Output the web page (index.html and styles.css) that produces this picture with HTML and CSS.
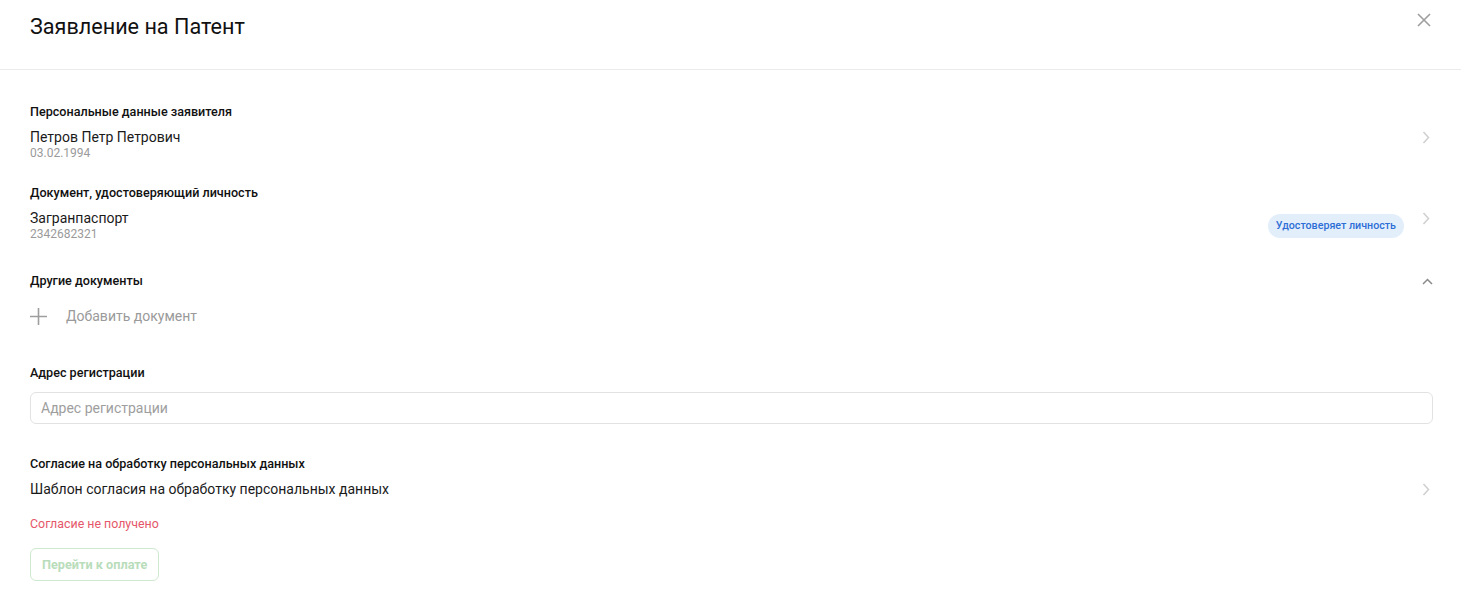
FILE: index.html
```html
<!DOCTYPE html>
<html lang="ru">
<head>
  <meta charset="UTF-8">
  <meta name="viewport" content="width=device-width, initial-scale=1.0">
  <title>Заявление на Патент</title>
  <link rel="stylesheet" href="styles.css">
</head>
<body>
  <div class="modal">
    <div class="head">
      <h1>Заявление на Патент</h1>
      <span class="close">
        <svg width="14" height="14" viewBox="0 0 14 14"><path d="M1 1L13 13M13 1L1 13" stroke="#9e9e9e" stroke-width="1.6" fill="none"/></svg>
      </span>
    </div>

    <div class="body">
      <!-- Personal data -->
      <div class="sec s1">
        <div class="label">Персональные данные заявителя</div>
        <div class="row">
          <div class="info">
            <div class="val">Петров Петр Петрович</div>
            <div class="sub">03.02.1994</div>
          </div>
          <svg class="chev" width="8" height="13" viewBox="0 0 8 13"><path d="M1.5 1L6.5 6.5L1.5 12" stroke="#cfcfcf" stroke-width="1.5" fill="none"/></svg>
        </div>
      </div>

      <!-- Identity document -->
      <div class="sec s2">
        <div class="label">Документ, удостоверяющий личность</div>
        <div class="row">
          <div class="info">
            <div class="val">Загранпаспорт</div>
            <div class="sub">2342682321</div>
          </div>
          <span class="badge">Удостоверяет личность</span>
          <svg class="chev" width="8" height="13" viewBox="0 0 8 13"><path d="M1.5 1L6.5 6.5L1.5 12" stroke="#cfcfcf" stroke-width="1.5" fill="none"/></svg>
        </div>
      </div>

      <!-- Other documents -->
      <div class="sec s3">
        <div class="label head-row">
          <span>Другие документы</span>
          <svg class="up" width="11" height="7" viewBox="0 0 11 7"><path d="M1 6L5.5 1.5L10 6" stroke="#8a8a8a" stroke-width="1.5" fill="none"/></svg>
        </div>
        <div class="add">
          <svg width="17" height="17" viewBox="0 0 17 17"><path d="M8.5 0V17M0 8.5H17" stroke="#9e9e9e" stroke-width="1.6" fill="none"/></svg>
          <span>Добавить документ</span>
        </div>
      </div>

      <!-- Address -->
      <div class="sec s4">
        <div class="label">Адрес регистрации</div>
        <input class="field" type="text" placeholder="Адрес регистрации">
      </div>

      <!-- Consent -->
      <div class="sec s5">
        <div class="label">Согласие на обработку персональных данных</div>
        <div class="row">
          <div class="val big">Шаблон согласия на обработку персональных данных</div>
          <svg class="chev" width="8" height="13" viewBox="0 0 8 13"><path d="M1.5 1L6.5 6.5L1.5 12" stroke="#cfcfcf" stroke-width="1.5" fill="none"/></svg>
        </div>
        <div class="err">Согласие не получено</div>
        <button class="pay" disabled>Перейти к оплате</button>
      </div>
    </div>
  </div>
</body>
</html>
```

FILE: styles.css
```css
body {
  margin: 0;
  font-family: Roboto, "Liberation Sans", Arial, sans-serif;
  color: #1a1a1a;
  background: #fff;
}

.head {
  height: 70px;
  border-bottom: 1px solid #ebebeb;
  box-sizing: border-box;
  display: flex;
  justify-content: space-between;
  align-items: flex-start;
  padding: 0 29px 0 30px;
}

.head h1 {
  margin: 13px 0 0;
  font-size: 21.6px;
  font-weight: 400;
  line-height: 28px;
  color: #111;
}

.close {
  margin-top: 12px;
  margin-right: 1px;
  cursor: pointer;
}

.body {
  padding: 34px 28px 0 30px;
}

.label {
  font-size: 12.6px;
  font-weight: 500;
  line-height: 16px;
  color: #111;
}

.row {
  display: flex;
  align-items: flex-start;
}

.head-row {
  display: flex;
  align-items: center;
}

.info {
  flex: 1;
  margin-top: 8px;
}

.val {
  font-size: 14px;
  line-height: 18px;
}

.val.big {
  flex: 1;
  line-height: 20px;
  margin-top: 7px;
}

.sub {
  font-size: 12px;
  line-height: 14px;
  color: #9a9a9a;
}

.chev {
  margin: 11px 3px 0 0;
}

.badge {
  align-self: center;
  background: #e3eefb;
  color: #2d6fd6;
  font-size: 10.7px;
  font-weight: 500;
  line-height: 24px;
  padding: 0 8px;
  border-radius: 12px;
  margin: 9px 18px 0 0;
}

.up {
  margin: 0 0 0 auto;
}

.s1 { margin-bottom: 25px; }
.s2 { margin-bottom: 32px; }
.s3 { margin-bottom: 37px; }
.s4 { margin-bottom: 32px; }

.add {
  display: flex;
  align-items: center;
  height: 24px;
  margin-top: 15px;
  color: #9a9a9a;
  font-size: 14px;
}

.add span {
  margin-left: 19px;
}

.field {
  display: block;
  width: 100%;
  box-sizing: border-box;
  height: 32px;
  margin-top: 11px;
  padding: 0 10px;
  border: 1px solid #e2e2e2;
  border-radius: 6px;
  font-family: inherit;
  font-size: 14px;
  outline: none;
}

.field::placeholder {
  color: #9e9e9e;
}

.err {
  margin-top: 18px;
  font-size: 12.4px;
  line-height: 14px;
  color: #e5576a;
}

.pay {
  margin-top: 17px;
  height: 33px;
  padding: 0 11px;
  background: #fff;
  border: 1px solid #cde8cf;
  border-radius: 6px;
  color: #b9ddbb;
  font-family: inherit;
  font-size: 12.7px;
  font-weight: 700;
}
```
